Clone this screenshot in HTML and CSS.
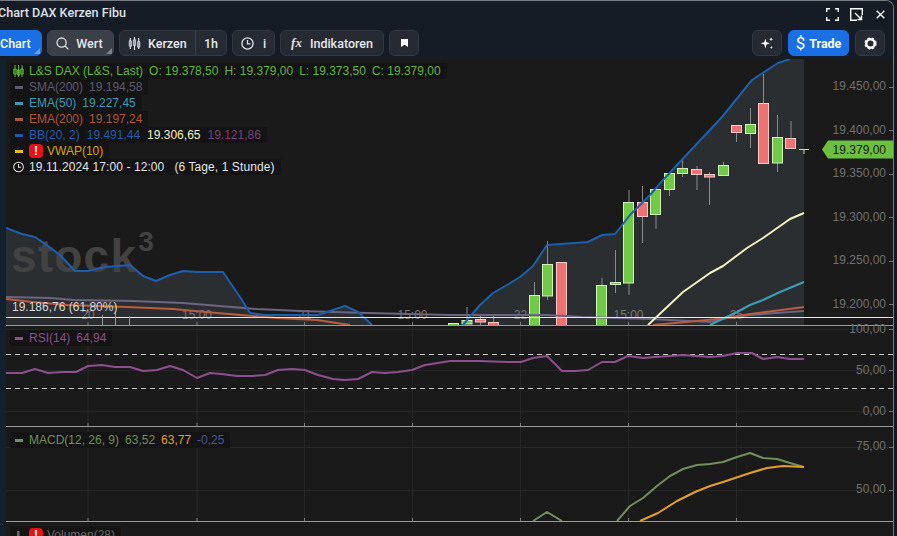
FILE: index.html
```html
<!DOCTYPE html>
<html lang="de">
<head>
<meta charset="utf-8">
<title>Chart DAX Kerzen Fibu</title>
<link rel="stylesheet" href="styles.css">
</head>
<body>
<div class="window">
  <header class="head">
    <div class="title-row">
      <h1 class="title">Chart DAX Kerzen Fibu</h1>
      <div class="win-icons">
        <svg class="ico13" viewBox="0 0 13 13"><path d="M.7 4V.7H4M9 .7h3.3V4M12.3 9v3.3H9M4 12.3H.7V9"/></svg>
        <svg class="ico13" viewBox="0 0 13 13"><path d="M12.3 7V.7H.7v11.6H7M5 5l6.500 6.500M11.500 7.500v4h-4"/></svg>
        <svg class="ico9" viewBox="0 0 9 9"><path d="M.7.7l7.600 7.600M8.300.7L.7 8.300"/></svg>
      </div>
    </div>
    <nav class="toolbar">
      <button class="btn btn-primary btn-chart">Chart</button>
      <button class="btn btn-active btn-wert">
        <svg class="tico" viewBox="0 0 13 13"><circle cx="5.600" cy="5.600" r="4.600"/><path d="M9 9l3.400 3.400"/></svg>Wert
      </button>
      <div class="btn btn-group">
        <span class="seg seg-kerzen">
          <svg class="tico" viewBox="0 0 13 14"><path d="M2 1v12M6.500 0v14M11 1v12"/><path class="solid" d="M.8 4h2.400v6H.8zM5.300 3h2.400v6H5.300zM9.800 5h2.400v6H9.800z"/></svg>Kerzen
        </span>
        <span class="seg seg-time">1h</span>
      </div>
      <button class="btn btn-i">
        <svg class="tico" viewBox="0 0 13 13"><circle cx="6.500" cy="6.500" r="5.600"/><path d="M6.500 3v3.800h3"/></svg>i
      </button>
      <button class="btn btn-ind"><i class="fx">fx</i>Indikatoren</button>
      <button class="btn btn-mark">
        <svg class="mark" viewBox="0 0 7 8"><path d="M0 0h7v8L3.500 5.800 0 8z"/></svg>
      </button>
      <div class="toolbar-right">
        <button class="btn btn-spark">
          <svg class="spark" viewBox="0 0 13 13"><path d="M5 2.500l1 3.300 3.300 1-3.300 1L5 11.500l-1-3.700-3.500-1 3.500-1z"/><path d="M10.300 1l.5 1.500 1.400.5-1.400.5-.5 1.500-.5-1.500L8.400 3l1.400-.5zM10.500 9l.4 1.100 1.100.4-1.100.4-.4 1.100-.4-1.100-1.100-.4 1.100-.4z"/></svg>
        </button>
        <button class="btn btn-primary btn-trade"><span class="dollar">$</span>Trade</button>
        <button class="btn btn-gear">
          <svg class="gear" viewBox="0 0 13 13"><circle cx="6.500" cy="6.500" r="4.200"/><circle class="teeth" cx="6.500" cy="6.500" r="5.600"/></svg>
        </button>
      </div>
    </nav>
  </header>

  <main class="stage">
    <svg class="chart" viewBox="6 59 887 477">
      <defs>
        <clipPath id="main"><rect x="6" y="59" width="887" height="266"/></clipPath>
        <clipPath id="rsi"><rect x="6" y="326" width="887" height="100"/></clipPath>
        <clipPath id="macd"><rect x="6" y="427" width="887" height="94"/></clipPath>
      </defs>

      <g class="grid">
        <path d="M88 326V521M197 326V521M304.500 326V521M412.500 326V521M520.500 326V521M628.500 326V521M736.500 326V521"/>
        <path d="M6 329.500H893M6 370.500H893M6 411.500H893M6 447.500H893M6 490.500H893"/>
      </g>

      <g clip-path="url(#main)">
        <path class="band" d="M6 228L22 234 35 237 48 246 60 255 75 271 88 271 105 267 130 265 143 276 156 281 170 275 183 271 197 272 223 272 240 297 250 313 265 315 304 315 318 315 330 311 345 306 358 312 372 325H6Z"/>
        <path class="band" d="M463 325L480 305 493 293 507 285 520 277 533 266 547 245 588 242 602 235 615 234 630 215 650 195 663 180 722 117 752 80 778 63 790 59H804V325Z"/>
        <text class="wm" x="11" y="272">stock<tspan class="wm3" dx="1" dy="-21">3</tspan></text>
        <g class="time">
          <text x="88" y="319">20</text><text x="197" y="319">15:00</text><text x="304.500" y="319">21</text><text x="412.500" y="319">15:00</text><text x="520.500" y="319">22</text><text x="628.500" y="319">15:00</text><text x="736.500" y="319">25</text>
        </g>
        <path class="wick" d="M453.500 323V325M467 307V324M480.500 315V325M493.500 314V325M534.500 282V325M547.500 241V300M602 278V325M615.500 250V293M629 190V295M642.500 186V243M656 189V229M669.500 173V196M682.500 159V177M697 166V190M709.500 172V205M723.500 162V175M736.500 125V142M750.500 108V148M763.500 74V163M777.500 115V172M791 121V149"/>
        <g class="up">
          <rect x="448.500" y="323.500" width="10" height="3"/><rect x="462" y="320.500" width="10" height="3.500"/><rect x="529.500" y="295.500" width="10" height="31"/><rect x="542.500" y="264.500" width="10" height="31.500"/><rect x="596.500" y="285.500" width="10" height="41"/><rect x="610.500" y="282.500" width="10" height="2"/><rect x="623.500" y="202.500" width="10" height="80.500"/><rect x="650.500" y="189.500" width="10" height="25"/><rect x="664.500" y="173.500" width="10" height="16"/><rect x="677.500" y="168.500" width="10" height="5"/><rect x="718.500" y="165.500" width="10" height="10"/><rect x="745.500" y="124.500" width="10" height="9"/><rect x="772.500" y="137.500" width="10" height="25.500"/>
        </g>
        <g class="down">
          <rect x="475.500" y="319.500" width="10" height="2.500"/><rect x="488.500" y="322.500" width="10" height="4"/><rect x="556.500" y="262.500" width="10" height="64"/><rect x="637.500" y="202.500" width="10" height="14"/><rect x="691.500" y="169.500" width="10" height="5"/><rect x="704.500" y="174.500" width="10" height="2.500"/><rect x="731.500" y="125.500" width="10" height="7"/><rect x="758.500" y="103.500" width="10" height="60"/><rect x="785.500" y="138.500" width="10" height="10"/>
        </g>
        <path class="doji" d="M799 149.500H809M804 149.500V154"/>
        <path class="ln l-sma" d="M6 297L50 298 73 300 133 301 183 303 257 309 300 311 367 313 450 315 547 315 583 317 650 319 710 322 727 318 750 315 804 311"/>
        <path class="ln l-ema200" d="M6 299L33 302 67 305 127 307 173 309 217 313 277 318 317 320 350 325M653 325L697 321 727 318 750 314 804 307"/>
        <path class="ln l-ema50" d="M710 325L737 312 750 305 763 300 780 292 804 282"/>
        <path class="ln l-mid" d="M648 325L683 292 710 273 723 266 747 248 763 238 790 219 804 213"/>
        <path class="ln l-upper" d="M6 228L22 234 35 237 48 246 60 255 75 271 88 271 105 267 130 265 143 276 156 281 170 275 183 271 197 272 223 272 240 297 250 313 265 315 304 315 318 315 330 311 345 306 358 312 372 325M463 325L480 305 493 293 507 285 520 277 533 266 547 245 588 242 602 235 615 234 630 215 650 195 663 180 722 117 752 80 778 63 790 59"/>
      </g>

      <path class="hl" d="M6 317.500H893"/>
      <path class="fibtick" d="M102.500 315V325M115.500 312V325M129.500 316V325"/>
      <text class="fib" x="12" y="311">19.186,76 (61,80%)</text>

      <path class="sep" d="M6 325.500H893M6 426.500H893M6 521.500H893"/>
      <path class="tick" d="M88 322V325M197 322V325M304.500 322V325M412.500 322V325M520.500 322V325M628.500 322V325M736.500 322V325M88 423V426M197 423V426M304.500 423V426M412.500 423V426M520.500 423V426M628.500 423V426M736.500 423V426M88 518V521M197 518V521M304.500 518V521M412.500 518V521M520.500 518V521M628.500 518V521M736.500 518V521"/>

      <path class="dash" d="M6 354.500H893M6 388.500H893"/>
      <g clip-path="url(#rsi)">
        <path class="ln l-rsi" d="M6 373L22 373 35 369 48 373 62 372 76 372 88 366 102 365 115 367 130 367 143 371 157 370 170 366 183 370 197 378 210 373 222 374 237 376 252 376 265 375 278 370 292 369 305 370 318 375 333 379 345 380 358 379 372 372 385 373 398 372 412 370 425 365 438 363 450 361 480 361 507 362 521 362 533 358 547 356 562 371 575 371 588 370 602 362 615 362 628 356 643 358 655 357 670 356 683 355 710 357 723 356 737 353 752 353 763 359 777 357 790 359 804 359"/>
      </g>
      <g clip-path="url(#macd)">
        <path class="ln l-macd" d="M533 521L547 512 562 521M617 521L630 506 643 498 657 486 670 476 683 469 697 465 710 464 723 462 737 457 750 453 763 458 777 459 790 463 804 467"/>
        <path class="ln l-signal" d="M640 521L658 513 677 501 695 492 710 486 723 482 750 473 767 468 783 466 804 467"/>
      </g>

      <g class="axis">
        <text x="886" y="90">19.450,00</text><text x="886" y="134">19.400,00</text><text x="886" y="177">19.350,00</text><text x="886" y="221">19.300,00</text><text x="886" y="264">19.250,00</text><text x="886" y="308">19.200,00</text>
        <text x="886" y="333">100,00</text><text x="886" y="374">50,00</text><text x="886" y="415">0,00</text><text x="886" y="450">75,00</text><text x="886" y="493">50,00</text>
      </g>
      <path class="axtick" d="M889 87.500H893M889 130.500H893M889 174.500H893M889 217.500H893M889 261.500H893M889 304.500H893M889 329.500H893M889 370.500H893M889 411.500H893M889 447.500H893M889 490.500H893"/>

      <path class="tag" d="M822 149.500L828 140.500H893V158.500H828Z"/>
      <text class="tagtext" x="886" y="153.500">19.379,00</text>
    </svg>

    <div class="legend legend-main">
      <div class="row row1">
        <svg class="lg-ico green" viewBox="0 0 11 12"><path d="M2 0v12M5.500 0v12M9 0v12"/><path d="M.8 4h2.400v5H.8zM4.300 5h2.400v5H4.300zM7.800 4h2.400v5H7.800z"/></svg>
        <span class="green name">L&amp;S DAX (L&amp;S, Last)</span>
        <span class="green">O: 19.378,50</span><span class="green">H: 19.379,00</span><span class="green">L: 19.373,50</span><span class="green">C: 19.379,00</span>
      </div>
      <div class="row"><b class="sw sw-sma"></b><span class="c-sma name">SMA(200)</span><span class="c-sma">19.194,58</span></div>
      <div class="row"><b class="sw sw-ema50"></b><span class="c-ema50 name">EMA(50)</span><span class="c-ema50">19.227,45</span></div>
      <div class="row"><b class="sw sw-ema200"></b><span class="c-ema200 name">EMA(200)</span><span class="c-ema200">19.197,24</span></div>
      <div class="row row-bb"><b class="sw sw-bb"></b><span class="c-bb name">BB(20, 2)</span><span class="c-bb">19.491,44</span><span class="c-mid">19.306,65</span><span class="c-low">19.121,86</span></div>
      <div class="row"><b class="sw sw-vwap"></b><b class="alert">!</b><span class="c-vwap vwap">VWAP(10)</span></div>
      <div class="row row-time">
        <svg class="lg-ico clock" viewBox="0 0 12 12"><circle cx="6" cy="6" r="5.300"/><path d="M6 2.800V6.300H8.800"/></svg>
        <span class="name">19.11.2024 17:00 - 12:00</span><span class="span-note">(6 Tage, 1 Stunde)</span>
      </div>
    </div>

    <div class="legend legend-rsi"><div class="row"><b class="sw sw-rsi"></b><span class="c-rsi name">RSI(14)</span><span class="c-rsi">64,94</span></div></div>
    <div class="legend legend-macd"><div class="row"><b class="sw sw-macd"></b><span class="c-macd name">MACD(12, 26, 9)</span><span class="c-macd">63,52</span><span class="c-sig">63,77</span><span class="c-hist">-0,25</span></div></div>
    <div class="legend legend-vol"><div class="row">
      <svg class="lg-ico volico" viewBox="0 0 11 10"><path d="M0 6h2.500v4H0zM4 1h2.500v9H4zM8 7h2.500v3H8z"/></svg>
      <b class="alert">!</b><span class="c-vol vwap">Volumen(28)</span>
    </div></div>
  </main>
</div>
</body>
</html>
```

FILE: styles.css
```css
* { box-sizing: border-box; }
html, body { margin: 0; height: 100%; }
body {
  background: #101822;
  overflow: hidden;
  font-family: "Liberation Sans", Arial, sans-serif;
}
.window {
  width: 894px;
  height: 536px;
  display: flex;
  flex-direction: column;
  border-right: 1px solid #777b80;
  border-top: 1px solid #777b80;
  border-top-right-radius: 8px;
  overflow: hidden;
  background: #161c26;
}
.head { height: 58px; flex: none; background: #161c26; }
.title-row {
  height: 29px;
  display: flex;
  align-items: center;
  justify-content: space-between;
  padding: 0 8px 6px 0;
}
.title {
  margin: 0 0 0 -2px;
  font: 500 12.600px Roboto, sans-serif;
  color: #dde1e6;
}
.win-icons { display: flex; align-items: center; gap: 11px; margin-top: 3px; }
.ico13 { width: 13px; height: 13px; fill: none; stroke: #fff; stroke-width: 1.400; }
.ico9 { width: 9px; height: 9px; margin-left: 2px; fill: none; stroke: #fff; stroke-width: 1.400; }

.toolbar { display: flex; gap: 5px; height: 26px; }
.btn {
  height: 26px;
  padding: 0;
  display: flex;
  align-items: center;
  justify-content: center;
  position: relative;
  border: 1px solid #323844;
  border-radius: 6px;
  background: #252a33;
  color: #e6e8eb;
  font: 500 12.500px Roboto, sans-serif;
}
.btn-primary { background: #1b6fe4; border-color: #1b6fe4; color: #fff; }
.btn-chart { width: 56px; margin-left: -14px; justify-content: flex-start; padding-left: 13px; }
.btn-active { background: #3a3f48; border-color: #3f444d; }
.btn-chart::after, .btn-active::after {
  content: "";
  position: absolute;
  right: 1px;
  bottom: 1px;
  border: 3px solid transparent;
  border-right-color: rgba(255,255,255,.35);
  border-bottom-color: rgba(255,255,255,.35);
}
.btn-wert { width: 67px; gap: 7px; padding-right: 2px; }
.tico { width: 13px; height: 13px; fill: none; stroke: #dfe2e6; stroke-width: 1.300; }
.tico .solid { fill: #9aa0a8; stroke: #dfe2e6; stroke-width: .8; }
.btn-group { width: 108px; align-items: stretch; }
.seg { display: flex; align-items: center; }
.seg-kerzen { width: 76px; gap: 7px; padding-left: 8px; border-right: 1px solid #3a404b; }
.seg-time { flex: 1; justify-content: center; }
.btn-i { width: 43px; gap: 9px; }
.btn-ind { width: 104px; gap: 8px; }
.fx { font: italic 700 13px "Liberation Serif", serif; color: #dfe2e6; }
.btn-mark { width: 30px; }
.mark { width: 7px; height: 8px; fill: #fff; }
.toolbar-right { margin-left: auto; display: flex; gap: 6px; padding-right: 8px; }
.btn-spark, .btn-gear { width: 30px; }
.spark { width: 14px; height: 14px; fill: #fff; }
.gear { width: 13px; height: 13px; fill: none; stroke: #fff; stroke-width: 2.400; }
.gear .teeth { stroke-width: 1.100; stroke-dasharray: 2.500 2; }
.btn-trade { width: 61px; gap: 4px; font-weight: 700; font-size: 12.500px; }
.dollar { font: 400 17px Roboto, sans-serif; }

.stage {
  flex: 1;
  position: relative;
  background: #1a1a1a;
  margin-left: 6px;
}
.stage::before {
  content: "";
  position: absolute;
  top: 0; bottom: 0; left: -6px;
  width: 6px;
  background: #13202d;
}
.chart { display: block; width: 887px; height: 477px; }
.chart text { font-family: "Liberation Sans", Arial, sans-serif; font-size: 12px; }
.grid path { fill: none; stroke: #262626; stroke-width: 1; }
.band { fill: #2b2e30; }
.chart .wm { font-size: 46px; font-weight: 700; fill: #424242; letter-spacing: 1.200px; }
.wm3 { font-size: 28px; }
.time text { fill: #777; text-anchor: middle; }
.wick { fill: none; stroke: #8a8a8a; stroke-width: 1; }
.up rect { fill: #70c947; stroke: #d2f3bc; stroke-width: 1; }
.down rect { fill: #ee7272; stroke: #fbc9c9; stroke-width: 1; }
.doji { fill: none; stroke: #c6e2b0; stroke-width: 1; }
.ln { fill: none; stroke-width: 2; stroke-linejoin: round; }
.l-sma { stroke: #6b6482; }
.l-ema200 { stroke: #b95d40; }
.l-ema50 { stroke: #3d9db8; }
.l-mid { stroke: #f4efc0; }
.l-upper { stroke: #1b5fae; }
.l-rsi { stroke: #8e4f8e; }
.l-macd { stroke: #6f8f5c; }
.l-signal { stroke: #e69f25; }
.hl { stroke: #e8e8e8; stroke-width: 1; }
.fibtick { stroke: #999; stroke-width: 1; fill: none; }
.fib { fill: #d8d8d8; }
.sep { stroke: #9b9b9b; stroke-width: 1; fill: none; }
.tick { stroke: #7d7d7d; stroke-width: 1; fill: none; }
.dash { stroke: #c8c8c8; stroke-width: 1; stroke-dasharray: 5 4; fill: none; }
.axis text { fill: #707070; text-anchor: end; }
.axtick { stroke: #777; stroke-width: 1; fill: none; }
.tag { fill: #6cbf3f; }
.tagtext { fill: #10220a; text-anchor: end; }

.legend {
  position: absolute;
  left: 4px;
  font-size: 12px;
  line-height: 16px;
  white-space: nowrap;
  display: flex;
  flex-direction: column;
  align-items: flex-start;
}
.legend-main { top: 4px; }
.legend-rsi { top: 271px; }
.legend-macd { top: 373px; }
.legend-vol { top: 468px; }
.row {
  height: 16px;
  display: flex;
  align-items: center;
  gap: 6px;
  padding: 0 6px 0 5px;
  background: #141414;
}
.row-bb { gap: 7px; }
.row-bb .name { margin-left: -1px; margin-right: -1px; }
.row-bb .c-bb + .c-bb { margin-left: 1px; }
.sw { width: 8px; height: 3px; flex: none; }
.lg-ico { width: 11px; height: 12px; flex: none; margin-left: -2px; margin-right: -1px; fill: none; stroke: currentColor; }
.green { color: #62b53c; }
.sw-sma { background: #5e5970; } .c-sma { color: #5f5a70; }
.sw-ema50 { background: #3a9ab5; } .c-ema50 { color: #379ab8; }
.sw-ema200 { background: #b3533a; } .c-ema200 { color: #b3533a; }
.sw-bb { background: #1d57a8; } .c-bb { color: #1f5cad; }
.c-mid { color: #f4efc0; } .c-low { color: #7a3f78; }
.sw-vwap { background: #eeb90e; } .c-vwap { color: #d9a406; }
.sw-rsi { background: #8e4f8e; } .c-rsi { color: #8e4f8e; }
.sw-macd { background: #6f8f5c; } .c-macd { color: #6f8f5c; }
.c-sig { color: #e69f25; } .c-hist { color: #4d53a8; }
.c-vol { color: #686868; }
.alert {
  width: 14px;
  height: 14px;
  border-radius: 4px;
  background: #e8101a;
  color: #fff;
  font: 700 12px/14px "Liberation Sans", sans-serif;
  text-align: center;
  flex: none;
}
.vwap { margin-left: -2px; }
.row-time { color: #e4e4e4; letter-spacing: .09px; }
.clock { stroke: #e4e4e4; stroke-width: 1.100; }
.span-note { margin-left: 4px; }
.volico { fill: #666; stroke: none; }
```
